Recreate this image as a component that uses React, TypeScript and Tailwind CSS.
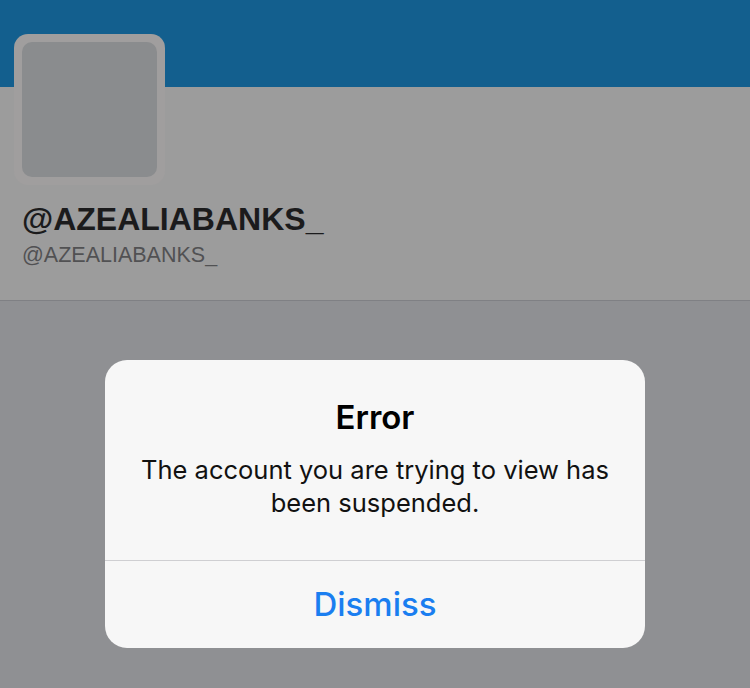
export default function App() {
  return (
    <div className="relative h-[688px] w-[750px] overflow-hidden bg-[#8f9093]" style={{ fontFamily: '"Liberation Sans", Arial, sans-serif' }}>
      <div className="h-[87px] bg-[#135f8e]" />
      <div className="flow-root bg-[#9c9c9c] border-b border-[#7f8084] pb-[32px]">
        <div className="-mt-[53px] ml-[14px] h-[151px] w-[151px] rounded-[14px] bg-[#a09e9e] p-[8px]">
          <div className="h-full w-full rounded-[10px] bg-[#8a8c8e]" />
        </div>
        <div className="ml-[22px] mt-[14px] text-[32px] font-bold leading-[40px] text-[#1b1b1c]">@AZEALIABANKS_</div>
        <div className="ml-[22px] mt-[3px] text-[21.5px] leading-[26px] text-[#515153]">@AZEALIABANKS_</div>
      </div>
      <div
        className="absolute left-[105px] top-[360px] flex h-[288px] w-[540px] flex-col rounded-[22px] bg-[#f7f7f7] text-center"
        style={{ fontFamily: 'Inter, "Noto Sans", sans-serif' }}
      >
        <div className="px-[20px] pb-[41px] pt-[39px]">
          <div className="text-[33px] font-semibold leading-[36px] text-black">Error</div>
          <div className="mt-[18px] text-[25.5px] leading-[33px] text-[#111]">
            The account you are trying to view has
            <br />
            been suspended.
          </div>
        </div>
        <div className="flex flex-1 items-center justify-center border-t border-[#cfcfd2] text-[33px] font-medium text-[#1a7ef0]">
          Dismiss
        </div>
      </div>
    </div>
  );
}
